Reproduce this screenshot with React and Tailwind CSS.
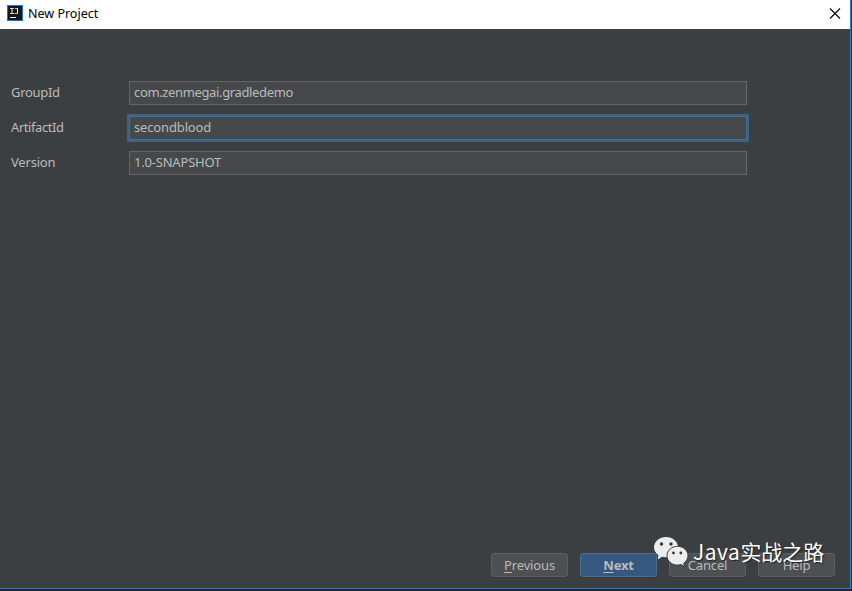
const FIELDS = [
  {
    id: "group",
    label: "GroupId",
    value: "com.zenmegai.gradledemo",
    labelClass: "tracking-[-0.3px]",
    textClass: "tracking-[-0.36px]",
  },
  {
    id: "artifact",
    label: "ArtifactId",
    value: "secondblood",
    labelClass: "tracking-[-0.42px]",
    textClass: "tracking-[-0.15px]",
    focused: true,
  },
  {
    id: "version",
    label: "Version",
    value: "1.0-SNAPSHOT",
    labelClass: "tracking-[-0.2px]",
    textClass: "tracking-[-0.2px]",
  },
];

function IdeaLogo() {
  return (
    <svg width="16" height="16" viewBox="0 0 16 16">
      <rect width="16" height="16" fill="#1478e0" />
      <rect x="1" y="1" width="14" height="14" fill="#171717" />
      <path d="M3 3.500h4M3 8.500h4M8 3.500h3M7.500 8.500h3" stroke="#c4c4c4" fill="none" />
      <path d="M5 3v6M10.500 3v5.500" stroke="#f0f0f0" fill="none" />
      <path d="M3 12.500h6" stroke="#fff" />
    </svg>
  );
}

function TitleBar() {
  return (
    <header className="flex h-[29px] shrink-0 items-start bg-white pl-[7px] pr-[9px] text-black">
      <div className="mt-[5px]">
        <IdeaLogo />
      </div>
      <h1 className="ml-[5px] mt-[5px] text-[12.5px] leading-[17px]">New Project</h1>
      <button className="ml-auto mt-2" aria-label="Close">
        <svg width="12" height="11" viewBox="0 0 12 11" stroke="#000" strokeWidth="1.1">
          <path d="M1 0.5l10 10M11 0.5l-10 10" />
        </svg>
      </button>
    </header>
  );
}

function Field({ id, label, value, focused, labelClass, textClass }) {
  return (
    <div className="flex h-6 items-center">
      <label htmlFor={id} className={`w-[118px] shrink-0 pb-0.5 leading-[22px] ${labelClass}`}>
        {label}
      </label>
      <input
        id={id}
        defaultValue={value}
        className={`h-6 w-[618px] border bg-[#45494a] px-1 pb-0.5 text-[#bbbbbb] outline-none ${textClass} ${
          focused ? "border-[#466d94] shadow-[0_0_0_2px_#3d6185]" : "border-[#646464]"
        }`}
      />
    </div>
  );
}

function DialogButton({ mnemonic, children, primary }) {
  return (
    <button
      className={`flex h-6 w-[77px] items-center justify-center rounded-[3px] border pt-0.5 shadow-[0_1px_0_#35383a] ${
        primary ? "border-[#4c708c] bg-[#365880] font-bold tracking-[-0.2px]" : "border-[#5e6060] bg-[#4c5052] tracking-[-0.15px]"
      }`}
    >
      <span>
        {mnemonic && <span className="underline underline-offset-2">{mnemonic}</span>}
        {children}
      </span>
    </button>
  );
}

// Two overlapping chat bubbles followed by the channel name
function Watermark() {
  return (
    <div className="pointer-events-none absolute left-[653px] top-[535px] flex items-start">
      <svg width="36" height="33" viewBox="0 0 36 33">
        <path
          d="M13 2C6.400 2 1 6.600 1 12.200c0 3.200 1.700 6 4.400 7.800L4.800 24.500l4.300-2.700c1.300.3 2.500.5 3.900.5 6.600 0 12-4.500 12-10.100S19.600 2 13 2z"
          fill="#ededed"
        />
        <circle cx="8.500" cy="9" r="1.700" fill="#33383a" />
        <circle cx="18" cy="9" r="1.700" fill="#33383a" />
        <path
          d="M24.500 11.300c-5.800 0-10.500 4.200-10.500 9.400s4.700 9.400 10.500 9.400c1.200 0 2.400-.2 3.500-.5l3.800 2-1.100-3.400c2.500-1.600 4.300-4.400 4.300-7.500 0-5.200-4.700-9.400-10.500-9.400z"
          fill="#ededed"
          stroke="#383b3d"
          strokeWidth="1"
        />
        <circle cx="20.500" cy="18" r="1.400" fill="#33383a" />
        <circle cx="27.800" cy="18" r="1.400" fill="#33383a" />
      </svg>
      <span className="-mt-px ml-1 whitespace-nowrap font-['Noto_Sans_CJK_SC',sans-serif] text-[21px] leading-[34px] text-white [text-shadow:1px_1px_1px_#222]">
        <span className="tracking-[0.5px]">Java</span>实战之路
      </span>
    </div>
  );
}

export default function App() {
  return (
    <div className="relative h-[591px] w-[852px] overflow-hidden bg-[#24282c] font-['Noto_Sans','Noto_Sans_CJK_SC',sans-serif] text-[13px] text-[#bbbbbb]">
      <div className="flex h-[589px] w-[851px] flex-col border-b border-r border-[#1883d7] bg-[#3c3f41]">
        <TitleBar />
        <main className="flex flex-1 flex-col gap-[11px] pl-[11px] pt-[52px]">
          {FIELDS.map((field) => (
            <Field key={field.id} {...field} />
          ))}
        </main>
        <footer className="flex justify-end gap-3 pb-[11px] pr-[15px]">
          <DialogButton mnemonic="P">revious</DialogButton>
          <DialogButton mnemonic="N" primary>
            ext
          </DialogButton>
          <DialogButton>Cancel</DialogButton>
          <DialogButton>Help</DialogButton>
        </footer>
      </div>
      <Watermark />
    </div>
  );
}
